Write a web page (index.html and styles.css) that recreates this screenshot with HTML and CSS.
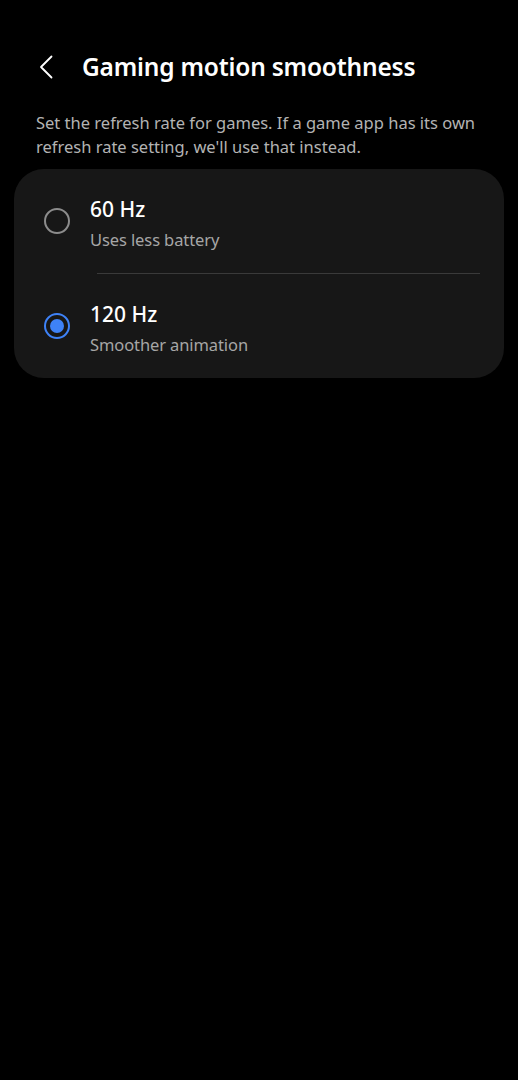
FILE: index.html
```html
<!DOCTYPE html>
<html lang="en">
<head>
<meta charset="utf-8">
<title>Gaming motion smoothness</title>
<link rel="stylesheet" href="styles.css">
</head>
<body>
<div class="screen">
  <header class="appbar">
    <span class="back" aria-label="Back">
      <svg width="14" height="24" viewBox="0 0 14 24"><path d="M12.5 1.5 L2 12 L12.5 22.5" fill="none" stroke="#ffffff" stroke-width="1.8" stroke-linecap="round" stroke-linejoin="round"/></svg>
    </span>
    <h1 class="title">Gaming motion smoothness</h1>
  </header>
  <p class="desc">Set the refresh rate for games. If a game app has its own refresh rate setting, we'll use that instead.</p>
  <div class="card">
    <div class="option">
      <span class="radio"></span>
      <div class="texts">
        <div class="opt-title">60 Hz</div>
        <div class="opt-sub">Uses less battery</div>
      </div>
    </div>
    <div class="divider"></div>
    <div class="option">
      <span class="radio on"></span>
      <div class="texts">
        <div class="opt-title">120 Hz</div>
        <div class="opt-sub">Smoother animation</div>
      </div>
    </div>
  </div>
</div>
</body>
</html>
```

FILE: styles.css
```css
* { box-sizing: border-box; }
html, body {
  margin: 0;
  padding: 0;
  background: #000;
}
body {
  width: 518px;
  height: 1080px;
  font-family: "Noto Sans", "Open Sans", sans-serif;
  color: #fff;
}
.screen {
  display: flex;
  flex-direction: column;
}
.appbar {
  display: flex;
  align-items: center;
  height: 54px;
  margin-top: 40px;
  padding-left: 39px;
}
.back {
  display: flex;
  width: 14px;
  height: 24px;
  margin-right: 29px;
}
.title {
  margin: 0;
  font-size: 24.5px;
  font-weight: 600;
  letter-spacing: -0.2px;
  line-height: 32px;
}
.desc {
  margin: 17px 0 0;
  padding: 0 36px;
  font-size: 16.5px;
  line-height: 24px;
  color: #b3b3b3;
}
.card {
  margin: 10px 14px 0;
  background: #171717;
  border-radius: 30px;
  display: flex;
  flex-direction: column;
}
.option {
  display: flex;
  align-items: center;
  height: 104px;
  padding-left: 30px;
}
.radio {
  width: 26px;
  height: 26px;
  border-radius: 50%;
  border: 2px solid #8c8c8c;
  margin-right: 20px;
  flex: none;
  position: relative;
}
.radio.on {
  border: 2.5px solid #3e82f7;
}
.radio.on::after {
  content: "";
  position: absolute;
  left: 3.5px;
  top: 3.5px;
  width: 14px;
  height: 14px;
  border-radius: 50%;
  background: #3e82f7;
}
.texts {
  display: flex;
  flex-direction: column;
  gap: 6px;
  padding-top: 5px;
}
.opt-title {
  font-size: 21px;
  font-weight: 500;
  line-height: 27px;
  color: #fff;
}
.opt-sub {
  font-size: 16.5px;
  line-height: 22px;
  color: #a6a6a6;
  letter-spacing: -0.1px;
}
.divider {
  height: 1px;
  background: #3a3a3a;
  margin: 0 24px 0 83px;
}
```
